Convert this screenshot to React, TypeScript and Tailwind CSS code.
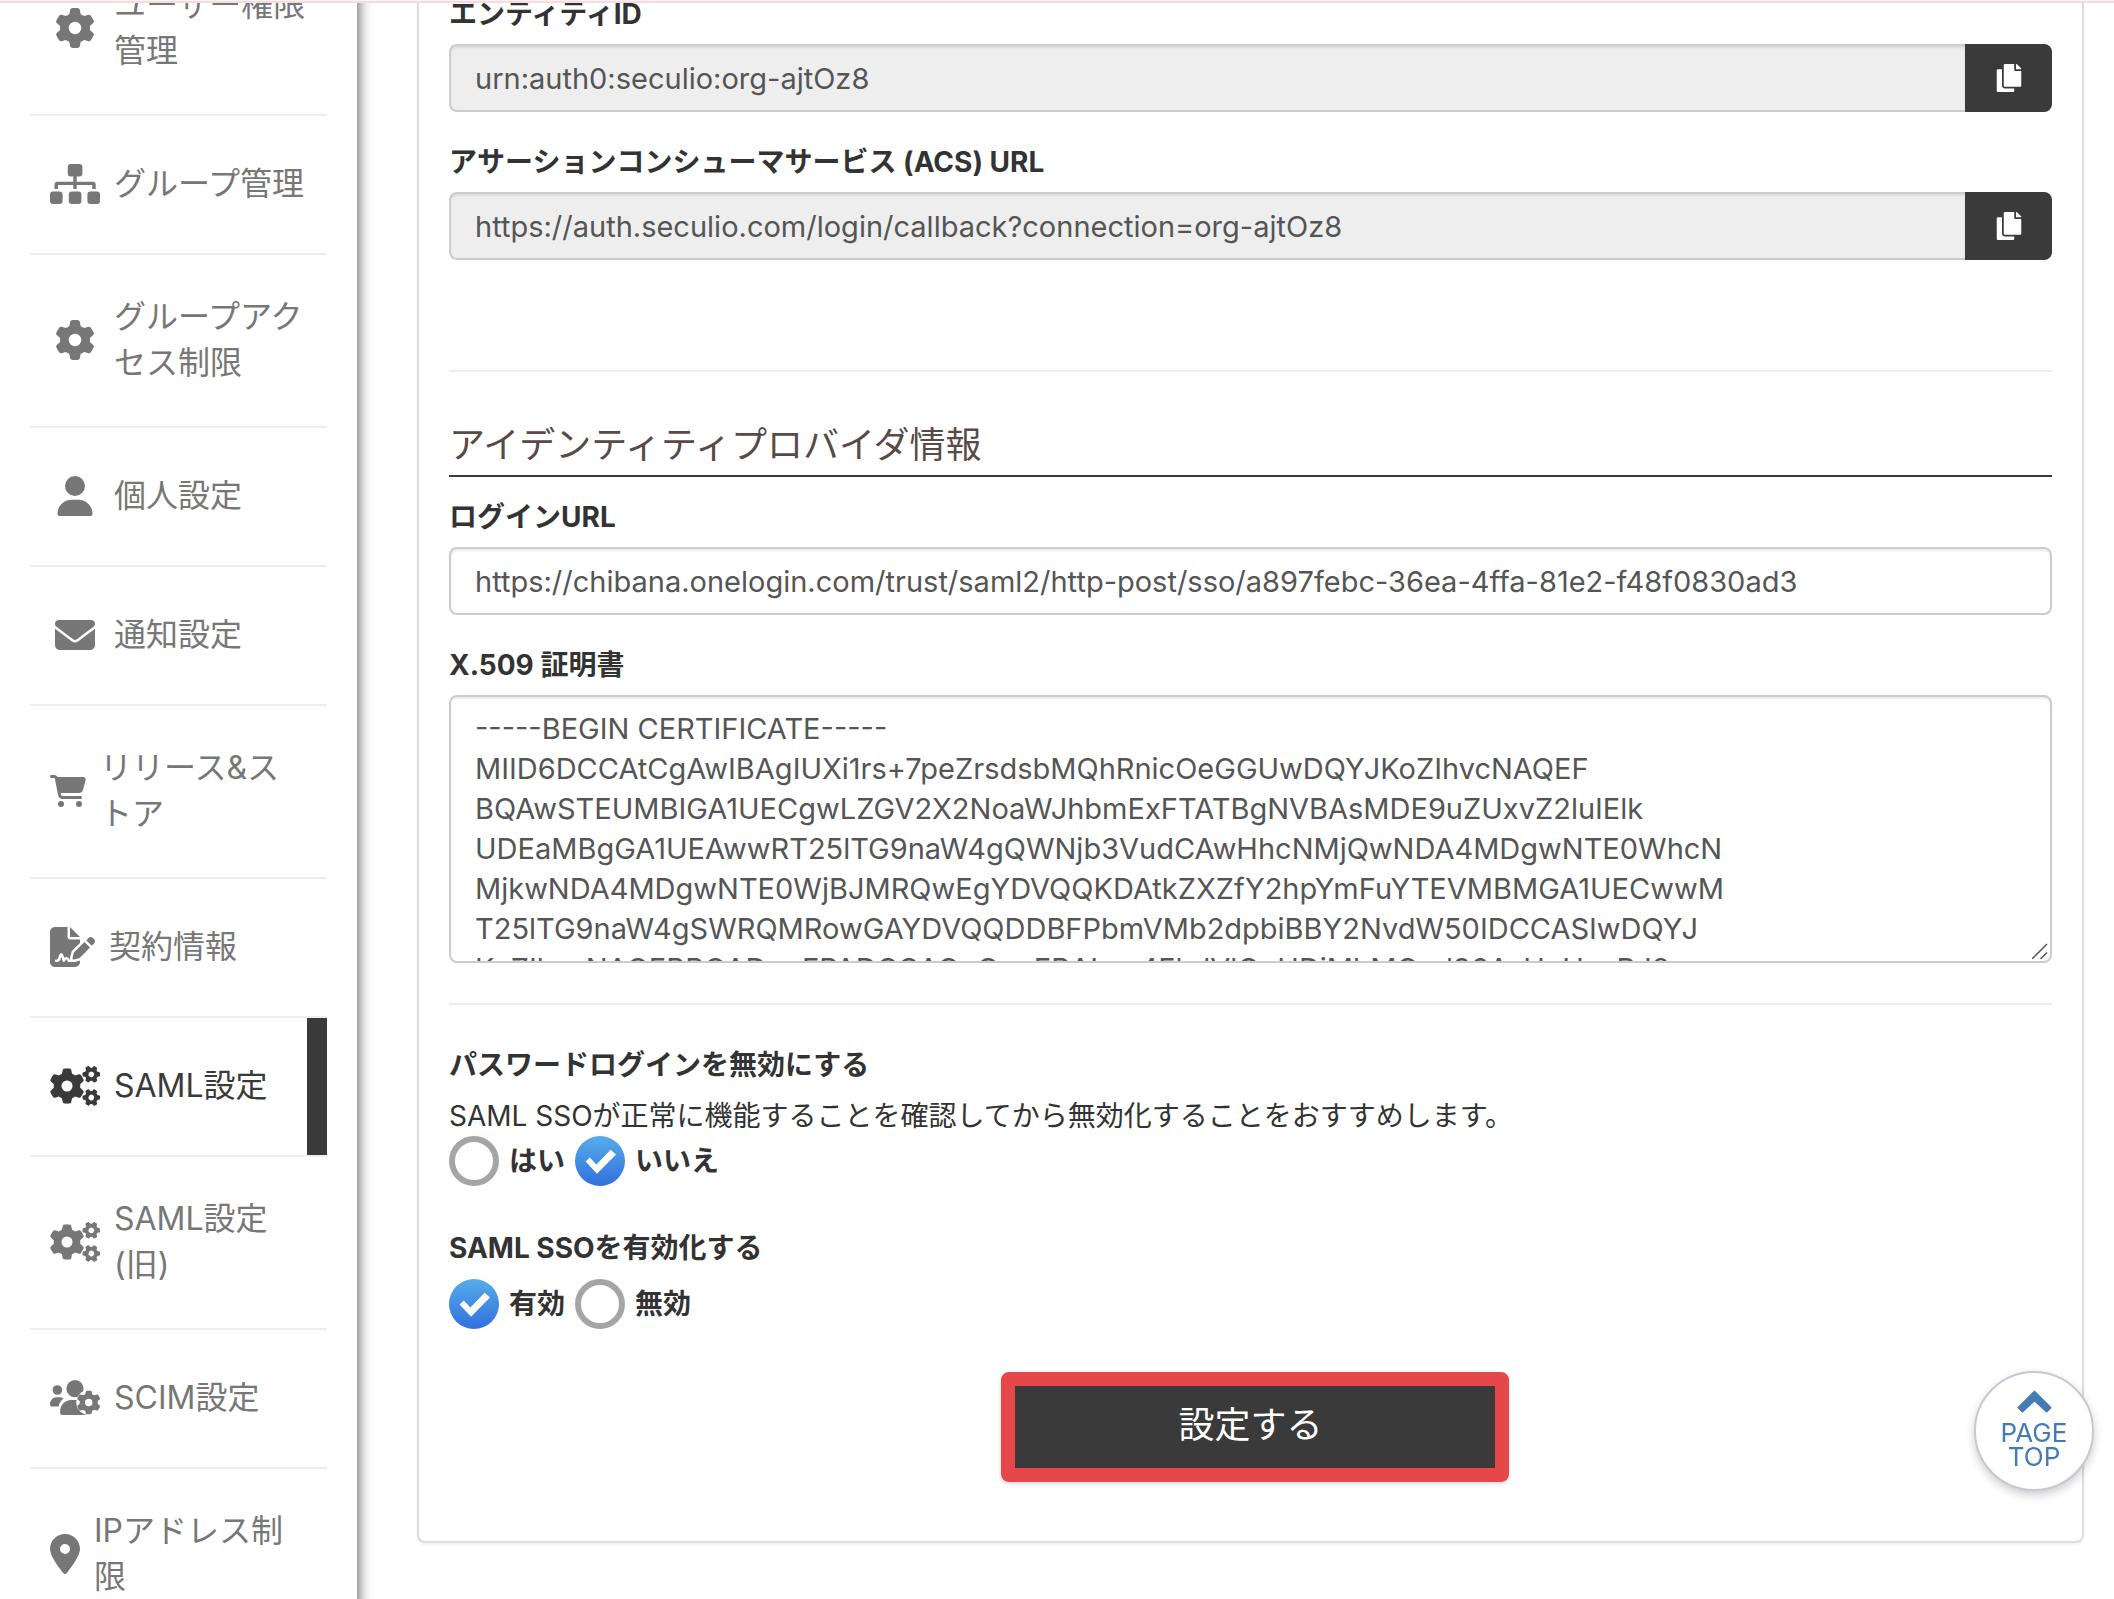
import { useState } from 'react'
import type { ReactNode } from 'react'
import { FaCopy } from 'react-icons/fa'
import {
  FaCartShopping,
  FaEnvelope,
  FaFileSignature,
  FaGear,
  FaLocationDot,
  FaUser,
} from 'react-icons/fa6'

const FONT = "font-['Inter','Noto_Sans_CJK_JP',sans-serif]"

const LABEL_CLASS = 'block text-[28px] leading-10 font-bold text-[#333]'

const FIELD_CLASS =
  'w-full border-2 border-[#ccc] px-6 text-[29px] leading-10 text-[#555] shadow-[inset_0_2px_2px_rgba(0,0,0,0.075)] outline-none focus:border-[#66afe9]'

function SitemapIcon() {
  return (
    <svg viewBox="0 0 50 40" className="h-10 w-[50px] fill-current" aria-hidden="true">
      <rect x="17.8" y="0" width="14.6" height="12.4" rx="3" />
      <path
        d="M6.2 25V20.6Q6.2 19.4 7.4 19.4H42.8Q44 19.4 44 20.6V25M25 12V25"
        className="fill-none stroke-current stroke-[3.4]"
      />
      <rect x="0" y="27.5" width="12.6" height="12.5" rx="3" />
      <rect x="18.8" y="27.5" width="12.6" height="12.5" rx="3" />
      <rect x="37.4" y="27.5" width="12.6" height="12.5" rx="3" />
    </svg>
  )
}

function GearsIcon() {
  return (
    <svg viewBox="0 0 50 40" className="h-10 w-[50px] overflow-visible" aria-hidden="true">
      <FaGear x="-0.7" y="2.3" size={35.4} />
      <g transform="rotate(30 41.3 8.3)">
        <FaGear x="32.5" y="-0.5" size={17.6} />
      </g>
      <g transform="rotate(30 41.3 31.5)">
        <FaGear x="32.5" y="22.7" size={17.6} />
      </g>
    </svg>
  )
}

function UsersGearIcon() {
  return (
    <svg viewBox="0 0 50 40" className="h-10 w-[50px] fill-current" aria-hidden="true">
      <circle cx="7.4" cy="12" r="4.8" />
      <path d="M0 26.5C0 22 3 19.3 7 19.3H9.500C11 19.3 12.300 19.700 13.500 20.400C10.800 22.500 9.200 25.300 8.600 28.600H2C.8 28.600 0 27.800 0 26.500Z" />
      <circle cx="25" cy="10.700" r="8.600" />
      <path d="M10 34C10 27.500 14.500 22 21.500 22H28.500C33 22 36 25 37 28V37H12.500C11 37 10 36 10 34Z" />
      <circle cx="38.700" cy="24.500" r="12.400" className="fill-white" />
      <FaGear x="26.700" y="12.500" size={24} />
      <path d="M28 31.500Q30 35 33.500 36V37H28Z" />
    </svg>
  )
}

interface NavItem {
  label: string
  icon: ReactNode
  active?: boolean
}

const NAV_ITEMS: NavItem[] = [
  { label: 'ユーザー権限管理', icon: <FaGear className="h-10 w-[50px]" /> },
  { label: 'グループ管理', icon: <SitemapIcon /> },
  { label: 'グループアクセス制限', icon: <FaGear className="h-10 w-[50px]" /> },
  { label: '個人設定', icon: <FaUser className="h-10 w-[50px]" /> },
  { label: '通知設定', icon: <FaEnvelope className="h-10 w-[50px]" /> },
  { label: 'リリース&ストア', icon: <FaCartShopping className="h-8 w-9" /> },
  { label: '契約情報', icon: <FaFileSignature className="h-10 w-[45px]" /> },
  { label: 'SAML設定', icon: <GearsIcon />, active: true },
  { label: 'SAML設定(旧)', icon: <GearsIcon /> },
  { label: 'SCIM設定', icon: <UsersGearIcon /> },
  { label: 'IPアドレス制限', icon: <FaLocationDot className="h-10 w-[30px]" /> },
]

const CERTIFICATE = `-----BEGIN CERTIFICATE-----
MIID6DCCAtCgAwIBAgIUXi1rs+7peZrsdsbMQhRnicOeGGUwDQYJKoZIhvcNAQEF
BQAwSTEUMBIGA1UECgwLZGV2X2NoaWJhbmExFTATBgNVBAsMDE9uZUxvZ2luIElk
UDEaMBgGA1UEAwwRT25lTG9naW4gQWNjb3VudCAwHhcNMjQwNDA4MDgwNTE0WhcN
MjkwNDA4MDgwNTE0WjBJMRQwEgYDVQQKDAtkZXZfY2hpYmFuYTEVMBMGA1UECwwM
T25lTG9naW4gSWRQMRowGAYDVQQDDBFPbmVMb2dpbiBBY2NvdW50IDCCASIwDQYJ
KoZIhvcNAQEBBQADggEPADCCAQoCggEBALnv4FhdVlQpUDjMhMQcd96AyHoUsoRJ8`

function Sidebar() {
  return (
    <nav className="relative z-10 -mt-[57px] w-[357px] shrink-0 self-start bg-white px-[30px] shadow-[0_0_14px_rgba(0,0,0,0.75)]">
      <ul>
        {NAV_ITEMS.map((item) => (
          <li key={item.label} className="border-b-2 border-[#eee]">
            <a
              href="#"
              aria-current={item.active ? 'page' : undefined}
              className={`flex min-h-[137px] items-center gap-[14px] pt-[39px] pb-10 pl-5 text-[32px] leading-[46px] ${
                item.active
                  ? 'border-r-[20px] border-[#3a3a3a] text-[#3a3a3a]'
                  : 'pr-5 text-[#777] hover:text-[#3a3a3a]'
              }`}
            >
              <span className="shrink-0">{item.icon}</span>
              <span>{item.label}</span>
            </a>
          </li>
        ))}
      </ul>
    </nav>
  )
}

function CopyField({ id, label, value }: { id: string; label: string; value: string }) {
  const copy = async () => {
    try {
      await navigator.clipboard.writeText(value)
    } catch {}
  }
  return (
    <div className="mb-[30px]">
      <label htmlFor={id} className={`${LABEL_CLASS} mb-[10px]`}>
        {label}
      </label>
      <div className="flex">
        <input
          id={id}
          type="text"
          readOnly
          value={value}
          className={`${FIELD_CLASS} h-[68px] min-w-0 flex-1 rounded-l-lg border-r-0 bg-[#eee]`}
        />
        <button
          type="button"
          onClick={copy}
          aria-label={`${label}をコピー`}
          className="flex h-[68px] w-[87px] items-center justify-center rounded-r-lg bg-[#3a3a3a] text-white"
        >
          <FaCopy className="size-7" />
        </button>
      </div>
    </div>
  )
}

interface RadioGroupProps {
  name: string
  options: string[]
  value: string
  onChange: (value: string) => void
}

function RadioGroup({ name, options, value, onChange }: RadioGroupProps) {
  return (
    <div className="flex gap-[10px]">
      {options.map((option) => (
        <label
          key={option}
          className="relative flex items-center gap-[10px] text-[28px] leading-10 font-bold text-[#333]"
        >
          <input
            type="radio"
            name={name}
            value={option}
            checked={option === value}
            onChange={() => onChange(option)}
            className="size-[50px] appearance-none rounded-full border-[6px] border-[#a5a5a5] bg-white checked:border-0 checked:bg-linear-to-b checked:from-[#58ace9] checked:to-[#3170de]"
          />
          {option === value && (
            <svg
              viewBox="0 0 50 50"
              className="pointer-events-none absolute top-0 left-0 size-[50px] fill-white"
              aria-hidden="true"
            >
              <path d="M10.6 25.4 14.8 21.6 21.4 28.6 35.6 13.8 41 18.4 22 37.8Z" />
            </svg>
          )}
          {option}
        </label>
      ))}
    </div>
  )
}

function PageTopLink() {
  return (
    <a
      href="#"
      className="fixed right-5 bottom-[108px] z-20 flex size-[120px] flex-col items-center rounded-full border-2 border-[#c5c9d1] bg-white pt-[17px] text-center text-[26px] leading-6 text-[#447ab5] shadow-[0_4px_10px_rgba(0,0,0,0.2)]"
    >
      <svg
        viewBox="0 0 35 23"
        className="mb-2 h-[23px] w-[35px] shrink-0 fill-current stroke-current stroke-2"
        strokeLinejoin="round"
        aria-hidden="true"
      >
        <path d="M17.5 1.600 33.500 17.600 29.600 21.500 17.500 10.200 5.400 21.500 1.500 17.600Z" />
      </svg>
      <span>PAGE</span>
      <span>TOP</span>
    </a>
  )
}

export default function App() {
  const [loginUrl, setLoginUrl] = useState(
    'https://chibana.onelogin.com/trust/saml2/http-post/sso/a897febc-36ea-4ffa-81e2-f48f0830ad3',
  )
  const [certificate, setCertificate] = useState(CERTIFICATE)
  const [passwordDisabled, setPasswordDisabled] = useState('いいえ')
  const [ssoEnabled, setSsoEnabled] = useState('有効')

  return (
    <div lang="ja" className={`flex h-screen overflow-hidden bg-white ${FONT}`}>
      <div className="fixed inset-x-0 top-0 z-30 h-[3px] border-t border-[#fcf0f1] bg-[#f2dee0]" />
      <Sidebar />

      <main className="min-w-0 flex-1 pr-[30px] pl-[60px]">
        <form
          onSubmit={(e) => e.preventDefault()}
          className="-mt-9 rounded-lg border-2 border-[#ddd] px-[30px] pt-7 pb-[68px] shadow-[0_2px_2px_rgba(0,0,0,0.05)]"
        >
          <CopyField id="entity-id" label="エンティティID" value="urn:auth0:seculio:org-ajtOz8" />
          <CopyField
            id="acs-url"
            label="アサーションコンシューマサービス (ACS) URL"
            value="https://auth.seculio.com/login/callback?connection=org-ajtOz8"
          />

          <hr className="mt-[110px] mb-12 border-t-2 border-[#eee]" />

          <h2 className="mb-5 border-b-2 border-[#3a3a3a] pb-[5px] text-[36px] leading-[50px] text-[#594a47]">
            アイデンティティプロバイダ情報
          </h2>

          <label htmlFor="login-url" className={`${LABEL_CLASS} mb-[10px]`}>
            ログインURL
          </label>
          <input
            id="login-url"
            type="text"
            value={loginUrl}
            onChange={(e) => setLoginUrl(e.target.value)}
            className={`${FIELD_CLASS} mb-[30px] block h-[68px] rounded-lg bg-white`}
          />

          <label htmlFor="certificate" className={`${LABEL_CLASS} mb-[10px]`}>
            X.509 証明書
          </label>
          <div className="relative">
            <textarea
              id="certificate"
              value={certificate}
              onChange={(e) => setCertificate(e.target.value)}
              className={`${FIELD_CLASS} block h-[268px] resize-none overflow-hidden rounded-lg bg-white py-3`}
            />
            <svg
              viewBox="0 0 16 16"
              className="pointer-events-none absolute right-1 bottom-1 size-4 fill-none stroke-[#555]"
              aria-hidden="true"
            >
              <path d="M0 16 15 1M8.500 16 15 9.500" strokeWidth="1.500" />
            </svg>
          </div>

          <hr className="my-10 border-t-2 border-[#eee]" />

          <fieldset>
            <legend className={LABEL_CLASS}>パスワードログインを無効にする</legend>
            <p className="mt-[11px] text-[28px] leading-10 text-[#333]">
              SAML SSOが正常に機能することを確認してから無効化することをおすすめします。
            </p>
            <RadioGroup
              name="password-login"
              options={['はい', 'いいえ']}
              value={passwordDisabled}
              onChange={setPasswordDisabled}
            />
          </fieldset>

          <fieldset className="mt-[42px]">
            <legend className={`${LABEL_CLASS} mb-[11px]`}>SAML SSOを有効化する</legend>
            <RadioGroup
              name="saml-sso"
              options={['有効', '無効']}
              value={ssoEnabled}
              onChange={setSsoEnabled}
            />
          </fieldset>

          <div className="relative mx-auto mt-12 w-[496px]">
            <button type="submit" className="h-24 w-full bg-[#3a3a3a] text-[36px] text-white">
              設定する
            </button>
            {/* highlight frame around the submit button */}
            <div className="pointer-events-none absolute -top-[5px] -right-[10px] -bottom-[9px] -left-[2px] rounded-lg border-[14px] border-[#e64749] shadow-[0_2px_4px_rgba(0,0,0,0.15)]" />
          </div>
        </form>
      </main>

      <PageTopLink />
    </div>
  )
}
